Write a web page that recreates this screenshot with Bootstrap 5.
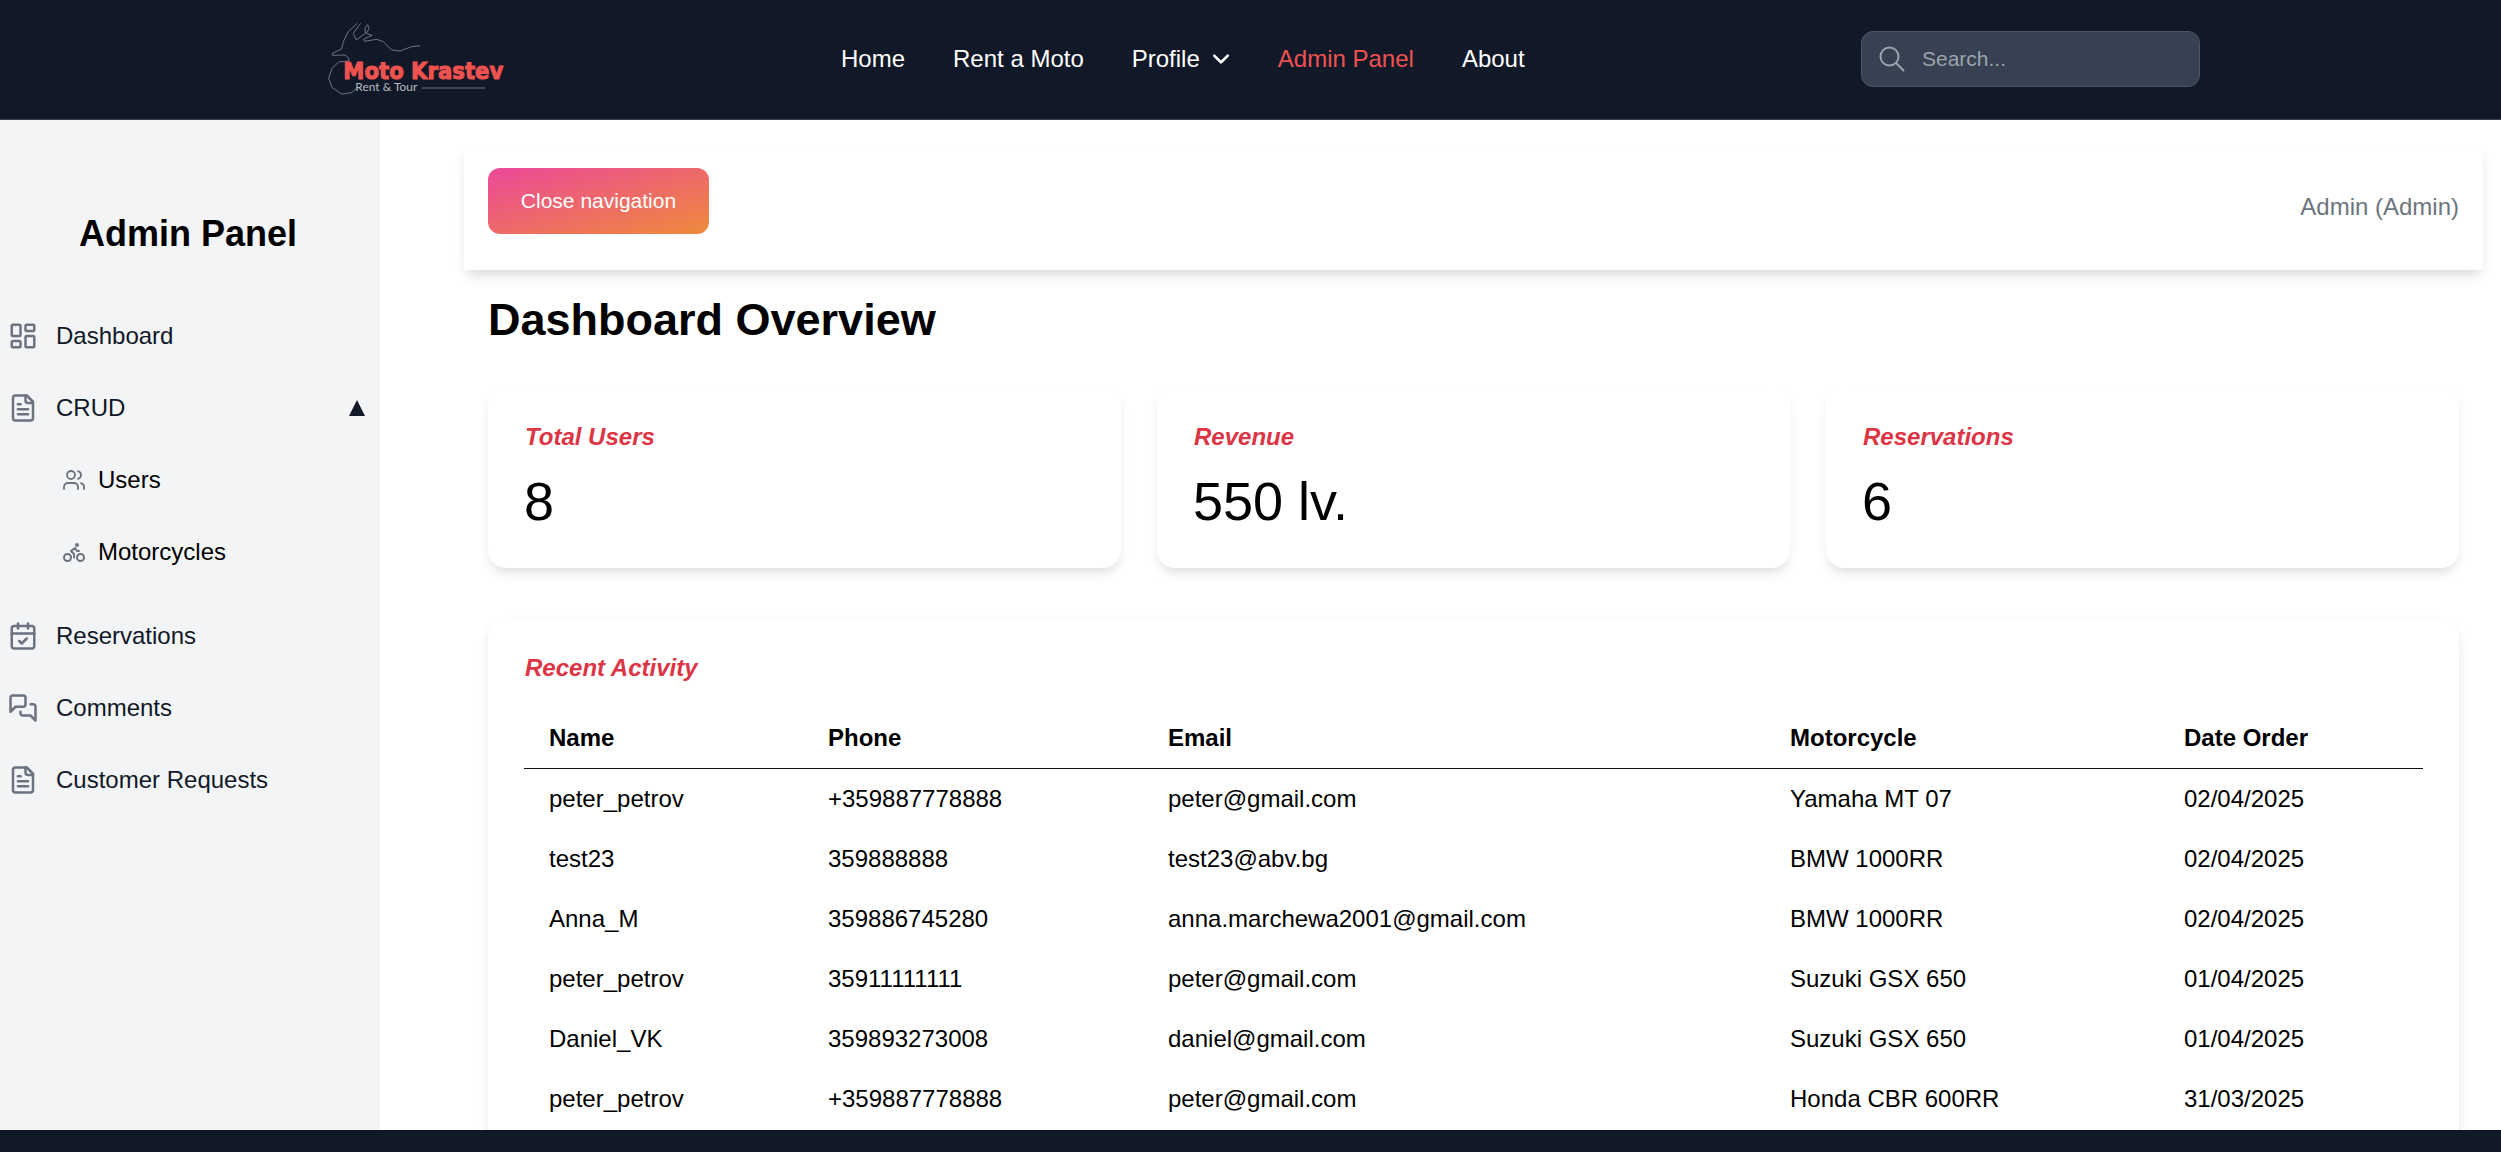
<!DOCTYPE html>
<html lang="en">
<head>
<meta charset="utf-8">
<title>Moto Krastev - Admin Panel</title>
<link href="https://cdn.jsdelivr.net/npm/bootstrap@5.3.0/dist/css/bootstrap.min.css" rel="stylesheet">
<style>
html{font-size:24px}
body{font-family:"Liberation Sans",Arial,sans-serif;height:100vh;overflow:hidden;color:#000;background:#fff}
.shell{height:100vh}
.topbar{height:120px;background:#111827;border-bottom:1px solid #374151;padding:0 301px 0 320px;flex:none}
.brand-svg{width:200px;height:100px;display:block}
.top-links{margin-left:321px;gap:48px}
.top-links .nav-link{padding:0;color:#fff;font-size:24px;line-height:36px;margin-top:-1px}
.top-links .nav-link.now{color:#f05252}
.chev{width:18px;height:18px;margin-left:12px}
.searchbox{width:339px;height:56px;background:#374151;border:1px solid #4b5563;border-radius:12px;padding-left:16px;margin-left:auto;margin-top:-1px}
.searchbox svg{width:28px;height:28px;flex:none}
.searchbox input{background:transparent;border:0;outline:0;color:#fff;font-size:21px;margin-left:14px;width:270px;font-family:inherit}
.searchbox input::placeholder{color:#9ca3af;opacity:1}
.middle{min-height:0;flex:1 1 0}
.sidebar{width:380px;background:#f3f4f6;flex:none}
.side-title{font-size:36px;font-weight:700;line-height:54px;text-align:center;margin:0;padding:87px 4px 0 0;height:180px;color:#000}
.side-item{height:72px;color:#111827;font-size:24px;padding-left:8px;text-decoration:none}
.side-item svg{width:30px;height:30px;flex:none;margin-right:18px;color:#6b7280}
.side-sub{height:72px;color:#000;font-size:24px;padding-left:62px;text-decoration:none}
.side-sub svg{width:24px;height:24px;flex:none;margin-right:12px;color:#6b7280}
.caret{margin-left:auto;margin-right:15px;width:0;height:0;border-left:8.5px solid transparent;border-right:8.5px solid transparent;border-bottom:16px solid #111827}
.side-gap{height:12px}
.mainpane{padding:27px 18px 0 84px;min-width:0;overflow:hidden}
.topcard{background:#fff;height:123px;padding:21px 24px 0;box-shadow:0 7px 12px -3px rgba(0,0,0,.16)}
.gradbtn{background:linear-gradient(to bottom right,#ec4899,#ef8a3c);color:#fff;border:0;border-radius:12px;height:66px;width:221px;font-size:21px;padding:0}
.gradbtn:hover{color:#fff}
.whoami{color:#6c757d;font-size:24px;line-height:36px;margin-top:21px}
.page-head{font-size:45px;font-weight:700;line-height:54px;margin:23px 0 38px 24px;color:#000}
.stats{margin:0 6px;--bs-gutter-x:36px}
.statbox{border:0;border-radius:18px;box-shadow:0 7px 12px -3px rgba(0,0,0,.14);height:183px;padding:34px 37px}
.stat-label{color:#dc3545;font-size:24px;font-weight:700;font-style:italic;line-height:36px;margin:0 0 14px}
.stat-num{font-size:54px;line-height:65px;margin:0 0 0 -1px;color:#000}
.activity{border:0;border-radius:18px;box-shadow:0 5px 12px -2px rgba(0,0,0,.14);margin:51px 24px 0;padding:31px 36px 40px}
.activity-title{color:#dc3545;font-size:24px;font-weight:700;font-style:italic;line-height:36px;margin:0 0 22px 1px}
.acts{margin:0;table-layout:fixed;width:100%;font-size:24px}
.acts th,.acts td{padding:12px 25px;border:0;line-height:36px;color:#000;white-space:nowrap}
.acts thead th{border-bottom:1px solid #111;padding-top:12px;padding-bottom:12px}
.c1{width:279px}.c2{width:340px}.c3{width:622px}.c4{width:394px}
.bottombar{height:22px;background:#111827;flex:none}
</style>
</head>
<body>
<div class="shell d-flex flex-column">
  <header class="topbar d-flex align-items-center">
    <a href="#" class="d-block">
      <svg class="brand-svg" viewBox="120 30 600 300" fill="none">
        <path d="M232 70 205 95 190 125 185 147 157 160 158 166 195 165 207 175 205 183 176 186 156 205 146 235 156 262 185 282 215 278 228 266" stroke="#9ca3af" stroke-width="2"/>
        <path d="M242 70 220 100 229 120 256 100 255 84 263 74 267 86 259 100 276 106 250 118 254 124 290 118 310 125 335 150 360 153 395 140 420 137" stroke="#9ca3af" stroke-width="2"/>
        <text x="190" y="238" fill="#ef5350" font-family="DejaVu Sans" font-weight="700" font-size="68" stroke="#ef5350" stroke-width="3" textLength="480" lengthAdjust="spacingAndGlyphs">Moto Krastev</text>
        <text x="226" y="273" fill="#b8bcc4" font-family="Lato" font-size="32" textLength="186" lengthAdjust="spacingAndGlyphs">Rent &amp; Tour</text>
        <path d="M425 264H615" stroke="#9ca3af" stroke-width="2"/>
      </svg>
    </a>
    <nav class="nav top-links align-items-center">
      <a class="nav-link" href="#">Home</a>
      <a class="nav-link" href="#">Rent a Moto</a>
      <a class="nav-link d-flex align-items-center" href="#">Profile
        <svg class="chev" viewBox="0 0 16 16" fill="none" stroke="#fff" stroke-width="2.4" stroke-linecap="round" stroke-linejoin="round"><path d="M2 5l6 6 6-6"/></svg>
      </a>
      <a class="nav-link now" href="#">Admin Panel</a>
      <a class="nav-link" href="#">About</a>
    </nav>
    <div class="searchbox d-flex align-items-center">
      <svg viewBox="0 0 28 28" fill="none" stroke="#9ca3af" stroke-width="2"><circle cx="11.5" cy="11.5" r="9"/><path d="M18 18l8 8"/></svg>
      <input type="text" placeholder="Search...">
    </div>
  </header>

  <div class="middle d-flex">
    <aside class="sidebar">
      <h2 class="side-title">Admin Panel</h2>
      <a href="#" class="side-item d-flex align-items-center">
        <svg viewBox="0 0 24 24" fill="none" stroke="currentColor" stroke-width="2" stroke-linecap="round" stroke-linejoin="round"><rect x="3" y="3" width="7" height="9" rx="1"/><rect x="14" y="3" width="7" height="5" rx="1"/><rect x="14" y="12" width="7" height="9" rx="1"/><rect x="3" y="16" width="7" height="5" rx="1"/></svg>Dashboard</a>
      <a href="#" class="side-item d-flex align-items-center">
        <svg viewBox="0 0 24 24" fill="none" stroke="currentColor" stroke-width="2" stroke-linecap="round" stroke-linejoin="round"><path d="M15 2H6a2 2 0 0 0-2 2v16a2 2 0 0 0 2 2h12a2 2 0 0 0 2-2V7Z"/><path d="M14 2v4a2 2 0 0 0 2 2h4"/><path d="M10 9H8"/><path d="M16 13H8"/><path d="M16 17H8"/></svg>CRUD<span class="caret"></span></a>
      <a href="#" class="side-sub d-flex align-items-center">
        <svg viewBox="0 0 24 24" fill="none" stroke="currentColor" stroke-width="1.8" stroke-linecap="round" stroke-linejoin="round"><path d="M16 21v-2a4 4 0 0 0-4-4H6a4 4 0 0 0-4 4v2"/><circle cx="9" cy="7" r="4"/><path d="M22 21v-2a4 4 0 0 0-3-3.87"/><path d="M16 3.13a4 4 0 0 1 0 7.75"/></svg>Users</a>
      <a href="#" class="side-sub d-flex align-items-center">
        <svg viewBox="0 0 24 24" fill="none" stroke="currentColor" stroke-width="2" stroke-linecap="round" stroke-linejoin="round"><circle cx="18.5" cy="17.5" r="3.5"/><circle cx="5.5" cy="17.5" r="3.5"/><circle cx="15" cy="5" r="1"/><path d="M12 17.5V14l-3-3 4-3 2 3h2"/></svg>Motorcycles</a>
      <div class="side-gap"></div>
      <a href="#" class="side-item d-flex align-items-center">
        <svg viewBox="0 0 24 24" fill="none" stroke="currentColor" stroke-width="2" stroke-linecap="round" stroke-linejoin="round"><path d="M8 2v4"/><path d="M16 2v4"/><rect x="3" y="4" width="18" height="18" rx="2"/><path d="M3 10h18"/><path d="m9 16 2 2 4-4"/></svg>Reservations</a>
      <a href="#" class="side-item d-flex align-items-center">
        <svg viewBox="0 0 24 24" fill="none" stroke="currentColor" stroke-width="2" stroke-linecap="round" stroke-linejoin="round"><path d="M14 9a2 2 0 0 1-2 2H6l-4 4V4c0-1.1.9-2 2-2h8a2 2 0 0 1 2 2z"/><path d="M18 9h2a2 2 0 0 1 2 2v11l-4-4h-6a2 2 0 0 1-2-2v-1"/></svg>Comments</a>
      <a href="#" class="side-item d-flex align-items-center">
        <svg viewBox="0 0 24 24" fill="none" stroke="currentColor" stroke-width="2" stroke-linecap="round" stroke-linejoin="round"><path d="M15 2H6a2 2 0 0 0-2 2v16a2 2 0 0 0 2 2h12a2 2 0 0 0 2-2V7Z"/><path d="M14 2v4a2 2 0 0 0 2 2h4"/><path d="M10 9H8"/><path d="M16 13H8"/><path d="M16 17H8"/></svg>Customer Requests</a>
    </aside>

    <main class="mainpane flex-grow-1">
      <div class="topcard d-flex justify-content-between align-items-start">
        <button type="button" class="btn gradbtn">Close navigation</button>
        <span class="whoami">Admin (Admin)</span>
      </div>
      <h1 class="page-head">Dashboard Overview</h1>
      <div class="row stats">
        <div class="col-4">
          <div class="card statbox"><p class="stat-label">Total Users</p><p class="stat-num">8</p></div>
        </div>
        <div class="col-4">
          <div class="card statbox"><p class="stat-label">Revenue</p><p class="stat-num">550 lv.</p></div>
        </div>
        <div class="col-4">
          <div class="card statbox"><p class="stat-label">Reservations</p><p class="stat-num">6</p></div>
        </div>
      </div>
      <div class="card activity">
        <p class="activity-title">Recent Activity</p>
        <table class="table table-borderless acts">
          <thead><tr><th class="c1">Name</th><th class="c2">Phone</th><th class="c3">Email</th><th class="c4">Motorcycle</th><th>Date Order</th></tr></thead>
          <tbody>
            <tr><td>peter_petrov</td><td>+359887778888</td><td>peter@gmail.com</td><td>Yamaha MT 07</td><td>02/04/2025</td></tr>
            <tr><td>test23</td><td>359888888</td><td>test23@abv.bg</td><td>BMW 1000RR</td><td>02/04/2025</td></tr>
            <tr><td>Anna_M</td><td>359886745280</td><td>anna.marchewa2001@gmail.com</td><td>BMW 1000RR</td><td>02/04/2025</td></tr>
            <tr><td>peter_petrov</td><td>35911111111</td><td>peter@gmail.com</td><td>Suzuki GSX 650</td><td>01/04/2025</td></tr>
            <tr><td>Daniel_VK</td><td>359893273008</td><td>daniel@gmail.com</td><td>Suzuki GSX 650</td><td>01/04/2025</td></tr>
            <tr><td>peter_petrov</td><td>+359887778888</td><td>peter@gmail.com</td><td>Honda CBR 600RR</td><td>31/03/2025</td></tr>
          </tbody>
        </table>
      </div>
    </main>
  </div>
  <footer class="bottombar"></footer>
</div>
<script src="https://cdn.jsdelivr.net/npm/bootstrap@5.3.0/dist/js/bootstrap.bundle.min.js"></script>
</body>
</html>
